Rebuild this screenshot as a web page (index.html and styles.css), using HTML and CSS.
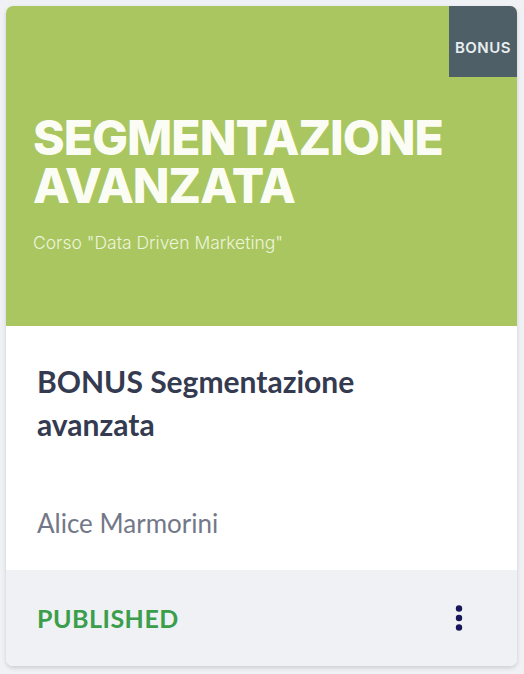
FILE: index.html
```html
<!DOCTYPE html>
<html lang="en">

<head>
    <meta charset="UTF-8">
    <meta name="viewport" content="width=device-width, initial-scale=1.0">
    <title>BONUS Segmentazione avanzata</title>
    <link rel="stylesheet" href="styles.css">
</head>

<body>
    <div class="card">
        <div class="cover">
            <span class="badge">BONUS</span>
            <div class="cover__title">
                <div>SEGMENTAZIONE</div>
                <div>AVANZATA</div>
            </div>
            <div class="cover__sub">Corso "Data Driven Marketing"</div>
        </div>
        <div class="card__body">
            <h2 class="card__title">BONUS Segmentazione avanzata</h2>
            <div class="card__author">Alice Marmorini</div>
        </div>
        <div class="card__footer">
            <span class="status">PUBLISHED</span>
            <button class="menu" aria-label="More">
                <svg width="8" height="26" viewBox="0 0 8 26">
                    <circle cx="4" cy="3.5" r="3.2" fill="#17175a"/>
                    <circle cx="4" cy="13" r="3.2" fill="#17175a"/>
                    <circle cx="4" cy="22.5" r="3.2" fill="#17175a"/>
                </svg>
            </button>
        </div>
    </div>
</body>

</html>
```

FILE: styles.css
```css
body {
    margin: 0;
    padding: 6px;
    background-color: #f0f1f4;
    font-family: Lato, Arial, sans-serif;
}

.card {
    width: 511px;
    background-color: #fff;
    border-radius: 7px;
    overflow: hidden;
    box-shadow: 0 2px 4px rgba(0, 0, 0, 0.15);
}

.cover {
    position: relative;
    height: 320px;
    background-color: #a9c660;
    padding: 108px 0 0 27px;
    box-sizing: border-box;
    color: #fbfdf5;
    font-family: Inter, sans-serif;
}

.badge {
    position: absolute;
    top: 0;
    right: 0;
    width: 68px;
    height: 71px;
    background-color: #4e5f68;
    color: #e8eef0;
    font-weight: 600;
    font-size: 15px;
    letter-spacing: 0.5px;
    display: flex;
    align-items: center;
    justify-content: center;
    padding-top: 12px;
    box-sizing: border-box;
}

.cover__title {
    font-weight: 800;
    font-size: 48px;
    line-height: 48px;
    letter-spacing: -1px;
}

.cover__sub {
    font-size: 17.5px;
    font-weight: 300;
    line-height: 20px;
    margin-top: 23px;
    color: #eef4dc;
}

.card__body {
    padding: 34px 31px 0;
    height: 244px;
    box-sizing: border-box;
}

.card__title {
    margin: 0;
    max-width: 360px;
    font-weight: 700;
    font-size: 30px;
    line-height: 43px;
    color: #343a50;
}

.card__author {
    margin-top: 61px;
    font-size: 26px;
    line-height: 32px;
    color: #737888;
}

.card__footer {
    height: 96px;
    background-color: #f0f1f4;
    display: flex;
    align-items: center;
    justify-content: space-between;
    padding: 0 54px 0 31px;
}

.status {
    font-weight: 700;
    font-size: 25px;
    letter-spacing: 0.5px;
    color: #3a9e4a;
}

.menu {
    border: none;
    background: none;
    padding: 0;
    display: flex;
    cursor: pointer;
}
```
